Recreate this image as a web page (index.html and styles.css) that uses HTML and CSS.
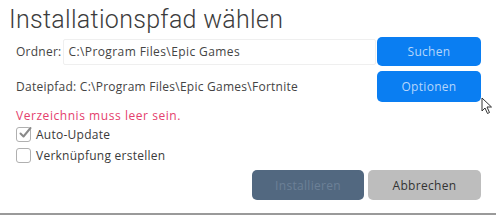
FILE: index.html
```html
<!DOCTYPE html>
<html lang="de">
<head>
<meta charset="utf-8">
<link rel="stylesheet" href="styles.css">
</head>
<body>
<div class="dialog">
  <h1 class="title">Installationspfad wählen</h1>
  <div class="row row-folder">
    <span class="label">Ordner:</span>
    <div class="input">C:\Program Files\Epic Games</div>
    <button class="btn btn-blue">Suchen</button>
  </div>
  <div class="row row-path">
    <span class="label path">Dateipfad: C:\Program Files\Epic Games\Fortnite</span>
    <button class="btn btn-blue">Optionen</button>
  </div>
  <div class="error">Verzeichnis muss leer sein.</div>
  <label class="check">
    <span class="box checked">
      <svg viewBox="0 0 16 16" width="16" height="16"><path d="M3.5 8.5 L6.5 11.5 L13.5 3" fill="none" stroke="#8a8a8a" stroke-width="2" stroke-linecap="round" stroke-linejoin="round"/></svg>
    </span>
    <span>Auto-Update</span>
  </label>
  <label class="check">
    <span class="box"></span>
    <span>Verknüpfung erstellen</span>
  </label>
  <div class="actions">
    <button class="btn btn-install">Installieren</button>
    <button class="btn btn-cancel">Abbrechen</button>
  </div>
  <svg class="cursor" width="12" height="18" viewBox="0 0 12 18"><path d="M1 1 L1 14 L4 11 L6.5 16.5 L8.5 15.5 L6 10 L10.5 10 Z" fill="#fff" stroke="#333" stroke-width="1"/></svg>
</div>
</body>
</html>
```
FILE: styles.css
```css
html, body {
  margin: 0;
  padding: 0;
  background: #fff;
}
body {
  width: 496px;
  height: 217px;
  overflow: hidden;
  font-family: "Open Sans", "Liberation Sans", sans-serif;
  color: #3a3a3a;
  letter-spacing: 0.25px;
}
.dialog {
  position: relative;
  box-sizing: border-box;
  height: 215px;
  border-bottom: 2px solid #9a9a9a;
  padding: 5px 15px 0 16px;
}
.title {
  margin: 0 0 0 -7px;
  font-family: "Roboto", "Liberation Sans", sans-serif;
  font-weight: 300;
  font-size: 25px;
  line-height: 30px;
  color: #3c3c3c;
  letter-spacing: 0.3px;
}
.row {
  display: flex;
  align-items: center;
  font-size: 12px;
}
.row-folder {
  margin-top: 2px;
  height: 29px;
}
.row-path {
  margin-top: 5px;
  height: 31px;
}
.label {
  color: #444;
  white-space: nowrap;
}
.input {
  margin-left: 2px;
  width: 313px;
  height: 26px;
  box-sizing: border-box;
  border: 1px solid #efefef;
  border-radius: 2px;
  padding: 0 0 0 4px;
  line-height: 24px;
  color: #444;
  white-space: nowrap;
  letter-spacing: 0.4px;
}
.path {
  flex: 1;
}
.btn {
  font-family: inherit;
  font-size: 12px;
  letter-spacing: 0.3px;
  border: none;
  border-radius: 5px;
  cursor: pointer;
}
.btn-blue {
  margin-left: auto;
  width: 104px;
  background: #0a7ef2;
  color: #b5d6fb;
}
.row-folder .btn-blue { height: 29px; }
.row-path .btn-blue { height: 31px; }
.error {
  margin-top: 6px;
  font-size: 12px;
  letter-spacing: 0.55px;
  color: #e4406d;
  line-height: 16px;
}
.check {
  display: flex;
  align-items: center;
  gap: 5px;
  font-size: 12px;
  color: #3a3a3a;
  height: 21px;
}
.box {
  width: 13px;
  height: 13px;
  border: 1px solid #b0b0b0;
  border-radius: 3px;
  position: relative;
}
.box svg {
  position: absolute;
  left: 0;
  top: -3px;
}
.actions {
  display: flex;
  justify-content: flex-end;
  gap: 4px;
  margin-top: 4px;
}
.btn-install {
  width: 112px;
  height: 30px;
  background: #526880;
  color: #6c8097;
}
.btn-cancel {
  width: 113px;
  height: 30px;
  background: #bdbdbd;
  color: #333;
}
.cursor {
  position: absolute;
  left: 481px;
  top: 97px;
}
```
